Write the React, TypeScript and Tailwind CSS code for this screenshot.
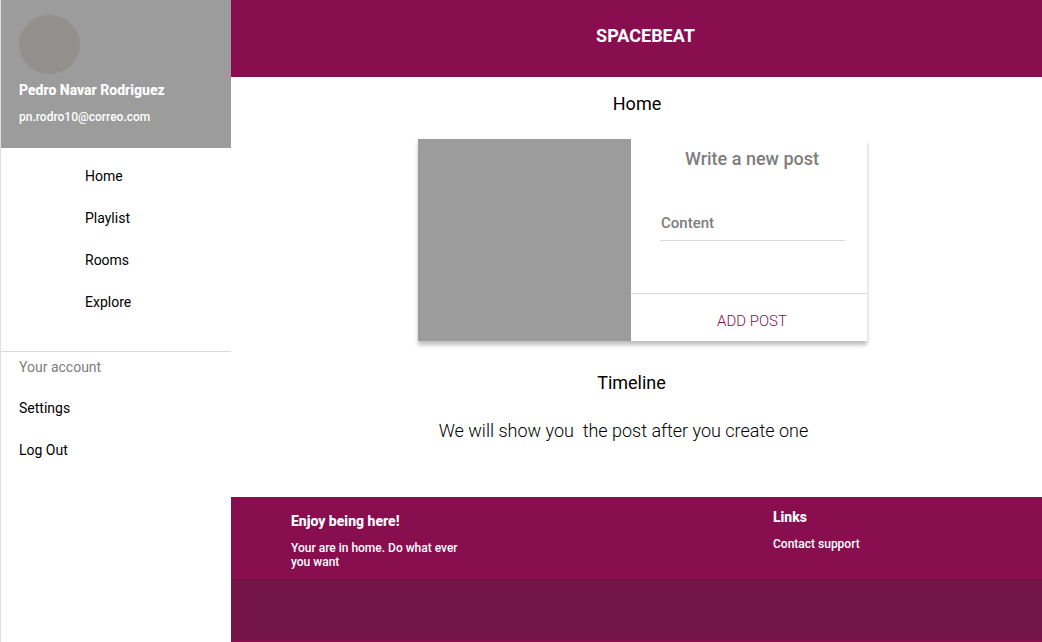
const navLinks = ['Home', 'Playlist', 'Rooms', 'Explore'];
const accountLinks = ['Settings', 'Log Out'];

function Sidebar() {
  return (
    <aside className="flex w-[231px] shrink-0 flex-col border-l border-[#e0e0e0] bg-white text-sm leading-[18px] text-black">
      <div className="h-[148px] bg-[#9c9c9c] px-[18px] pt-[15px] text-white">
        <div className="h-[59px] w-[61px] rounded-[50%] bg-[#92908d]" />
        <p className="mt-[7px] font-extrabold">Pedro Navar Rodriguez</p>
        <p className="mt-[10px] text-xs leading-[16px] font-medium">pn.rodro10@correo.com</p>
      </div>
      <nav aria-label="Main">
        <ul className="flex flex-col gap-6 pt-[19px] pb-10 pl-[84px]">
          {navLinks.map((label) => (
            <li key={label}>
              <a href="#" className="block">{label}</a>
            </li>
          ))}
        </ul>
      </nav>
      <section className="border-t border-[#dadada] px-[18px] pt-[6px]">
        <h2 className="text-[#7d7d7d]">Your account</h2>
        <ul className="flex flex-col gap-6 pt-[23px]">
          {accountLinks.map((label) => (
            <li key={label}>
              <a href="#" className="block">{label}</a>
            </li>
          ))}
        </ul>
      </section>
    </aside>
  );
}

function PostCard() {
  return (
    <form
      onSubmit={(event) => event.preventDefault()}
      className="ml-3 flex h-[202px] w-[449px] shadow-[0_4px_4px_rgba(0,0,0,0.25)]"
    >
      <div className="w-[213px] shrink-0 bg-[#9c9c9c]" />
      <div className="flex min-w-0 flex-1 flex-col text-center">
        <h2 className="pt-2 pl-1.5 text-lg leading-6 font-medium text-[#7d7d7d]">Write a new post</h2>
        <input
          type="text"
          aria-label="Content"
          placeholder="Content"
          className="mt-10 mr-[22px] ml-[29px] h-[30px] min-w-0 border-b border-[#dadada] pb-[5px] pl-px text-[15px] leading-5 font-medium text-black outline-none placeholder:text-[#7d7d7d] placeholder:opacity-100"
        />
        <button
          type="submit"
          className="mt-auto h-12 border-t border-[#dadada] pt-[7px] pl-1.5 text-[15px] font-light text-[#880e4f]"
        >
          ADD POST
        </button>
      </div>
    </form>
  );
}

function Footer() {
  return (
    <footer className="flex flex-1 flex-col bg-[#880e4f] text-white">
      <div className="flex h-[82px] pr-8 pl-[60px]">
        <div className="flex-1 pt-[15px]">
          <h2 className="text-sm leading-[18px] font-extrabold">Enjoy being here!</h2>
          <p className="mt-[11px] w-[180px] text-xs leading-[14px] font-medium">
            Your are in home. Do what ever you want
          </p>
        </div>
        <div className="w-[237px] pt-[11px]">
          <h2 className="text-sm leading-[18px] font-extrabold">Links</h2>
          <a href="#" className="mt-[11px] block text-xs leading-[14px] font-medium">
            Contact support
          </a>
        </div>
      </div>
      <div className="mb-0.5 flex-1 bg-[#721546]" />
    </footer>
  );
}

export default function App() {
  return (
    <div className="flex min-h-screen bg-white font-['Roboto',sans-serif]">
      <Sidebar />
      <div className="flex min-w-0 flex-1 flex-col">
        <header className="flex h-[77px] items-center justify-center bg-[#880e4f] pb-[6px] pl-[18px]">
          <span className="text-lg leading-6 font-bold text-white">SPACEBEAT</span>
        </header>
        <main className="flex h-[420px] flex-col items-center pt-[15px] text-black">
          <h1 className="mb-[23px] pl-px text-lg leading-6">Home</h1>
          <PostCard />
          <h2 className="mt-[30px] pr-2.5 text-lg leading-6">Timeline</h2>
          <p className="mt-6 pr-[26px] text-lg leading-6 font-light whitespace-pre">
            {'We will show you  the post after you create one'}
          </p>
        </main>
        <Footer />
      </div>
    </div>
  );
}
